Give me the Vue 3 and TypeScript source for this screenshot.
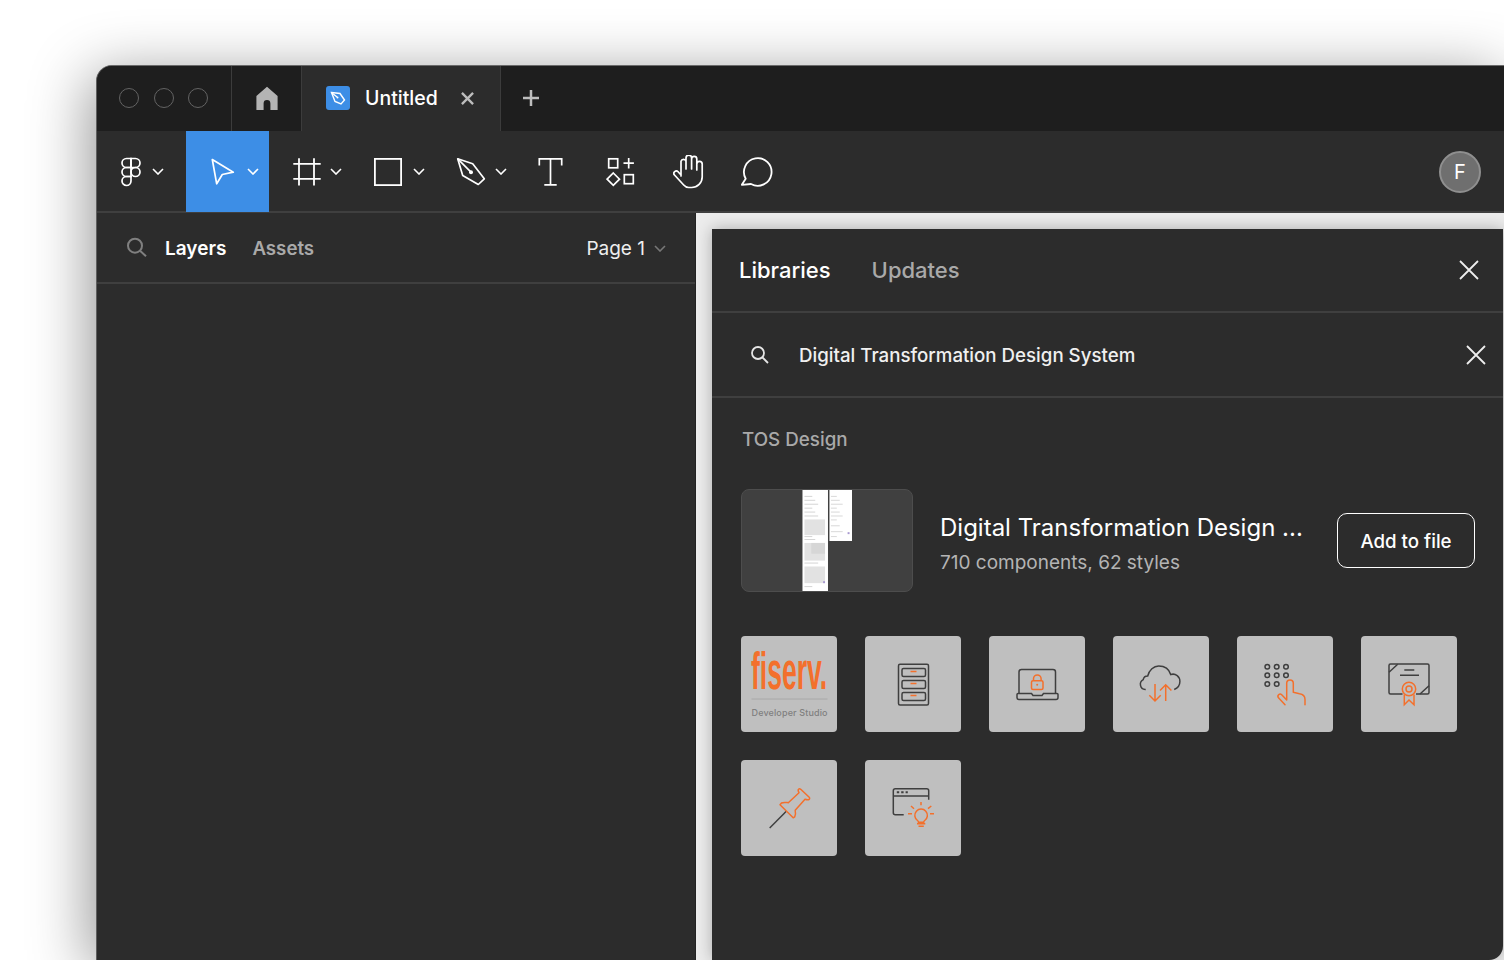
<script setup lang="ts">
// tiny text lines on the library thumbnail
const thumbLines = [6, 10, 14, 18, 22, 26, 47, 50, 74, 98].map((y, i) => ({ y, w: 8 + (i % 3) * 3 }));
const thumbLines2 = [6, 10, 14, 18, 22, 26, 30, 36, 42, 47].map((y, i) => ({ y, w: 6 + (i % 3) * 3 }));
</script>

<template>
  <div class="page">
    <div class="window">
      <header class="titlebar">
        <div class="lights">
          <span class="light"></span>
          <span class="light"></span>
          <span class="light"></span>
        </div>
        <div class="home-tab">
          <svg width="24" height="24" viewBox="0 0 24 24">
            <path fill="#b4b4b4" d="M12 .8 22.600 10v14h-7.200v-6.500a3.400 3.400 0 0 0-6.800 0V24H1.400V10z" />
          </svg>
        </div>
        <div class="file-tab">
          <span class="file-icon">
            <svg width="18" height="18" viewBox="0 0 18 18" fill="none" stroke="#fff" stroke-width="1.400">
              <path d="M2.500 3.500 11 4.500 15.500 11 12 15 6 12.500z" />
              <circle cx="8.500" cy="8.500" r="1" fill="#fff" stroke="none" />
              <path d="M3 4l5 4" />
            </svg>
          </span>
          <span class="file-name">Untitled</span>
          <svg class="file-close" width="13" height="13" viewBox="0 0 14 14" fill="none" stroke="#bdbdbd" stroke-width="2.500">
            <path d="M1 1l12 12M13 1 1 13" />
          </svg>
        </div>
        <svg class="new-tab" width="16" height="16" viewBox="0 0 16 16" fill="none" stroke="#bdbdbd" stroke-width="2.500">
          <path d="M8 0v16M0 8h16" />
        </svg>
      </header>

      <nav class="toolbar">
        <button class="tool tool-main">
          <svg width="30" height="30" viewBox="0 0 30 30" fill="none" stroke="#fff" stroke-width="1.700">
            <path d="M15 1.500h-4.500a4.500 4.500 0 0 0 0 9H15z" />
            <path d="M15 1.500h4.500a4.500 4.500 0 0 1 0 9H15z" />
            <path d="M15 10.500h-4.500a4.500 4.500 0 0 0 0 9H15z" />
            <circle cx="19.500" cy="15" r="4.500" />
            <path d="M10.500 19.500H15V24a4.500 4.500 0 1 1-4.500-4.500z" />
          </svg>
          <svg class="chev" width="12" height="7" viewBox="0 0 12 7"><path d="M1 1l5 5 5-5" /></svg>
        </button>
        <button class="tool tool-select">
          <svg width="30" height="30" viewBox="0 0 30 30" fill="none" stroke="#fff" stroke-width="1.700" stroke-linejoin="round">
            <path d="M4.300 2.500 25.300 15.200 14.300 17.500 8.700 26.800z" />
          </svg>
          <svg class="chev" width="12" height="7" viewBox="0 0 12 7"><path d="M1 1l5 5 5-5" /></svg>
        </button>
        <button class="tool tool-frame">
          <svg width="30" height="30" viewBox="0 0 30 30" fill="none" stroke="#fff" stroke-width="1.800">
            <path d="M2.300 6.800h27.400M2.300 21.800h27.400M8 1.200v27.300M23 1.200v27.300" />
          </svg>
          <svg class="chev" width="12" height="7" viewBox="0 0 12 7"><path d="M1 1l5 5 5-5" /></svg>
        </button>
        <button class="tool tool-rect">
          <svg width="30" height="30" viewBox="0 0 30 30" fill="none" stroke="#fff" stroke-width="1.800">
            <rect x="1.900" y="1.900" width="26.200" height="26.200" />
          </svg>
          <svg class="chev" width="12" height="7" viewBox="0 0 12 7"><path d="M1 1l5 5 5-5" /></svg>
        </button>
        <button class="tool tool-pen">
          <svg width="30" height="30" viewBox="0 0 30 30" fill="none" stroke="#fff" stroke-width="1.700" stroke-linejoin="round">
            <path d="M1.700 1.800 16.700 6.800 28.300 21.800 22.300 27.500 6.700 18.500z" />
            <path d="M1.700 1.800 15 15.200" />
            <circle cx="15" cy="15.200" r="2" fill="#fff" stroke="none" />
          </svg>
          <svg class="chev" width="12" height="7" viewBox="0 0 12 7"><path d="M1 1l5 5 5-5" /></svg>
        </button>
        <button class="tool tool-text">
          <svg width="30" height="30" viewBox="0 0 30 30" fill="none" stroke="#fff" stroke-width="1.700">
            <path d="M3.300 8.500V1.800h22.400v6.700M14.500 1.800v26M8.300 27.800h12.400" />
          </svg>
        </button>
        <button class="tool tool-comps">
          <svg width="30" height="30" viewBox="0 0 30 30" fill="none" stroke="#fff" stroke-width="1.700">
            <rect x="2.700" y="1.800" width="9" height="9" />
            <path d="M22.700 1v10.400M17.500 6.200h10.400" />
            <path d="M7.300 16 13.500 22.200 7.300 28.400 1.100 22.200z" />
            <rect x="18.300" y="17.700" width="9" height="9" />
          </svg>
        </button>
        <button class="tool tool-hand">
          <svg width="32" height="34" viewBox="0 0 32 34" fill="none" stroke="#fff" stroke-width="1.700" stroke-linecap="round" stroke-linejoin="round">
            <path d="M8 21V6.200a2.600 2.600 0 0 1 5 0V14M13 13V3a2.800 2.800 0 0 1 5.600 0v11M18.600 14V4a2.600 2.600 0 0 1 5.200 0v10M23.800 15V9a2.700 2.700 0 0 1 5.400 0v13a10.500 10.500 0 0 1-10.500 10.500h-3a7 7 0 0 1-5-2.500L1.500 20a2.400 2.400 0 0 1 3.600-3.200L8 20" />
          </svg>
        </button>
        <button class="tool tool-comment">
          <svg width="32" height="30" viewBox="0 0 32 30" fill="none" stroke="#fff" stroke-width="1.800" stroke-linejoin="round">
            <path d="M4.700 21.700A13.800 13.800 0 1 1 10 27L.8 27.800z" />
          </svg>
        </button>
        <div class="avatar">F</div>
      </nav>

      <div class="main">
        <aside class="sidebar">
          <div class="side-head">
            <svg class="side-search" width="22" height="22" viewBox="0 0 22 22" fill="none" stroke="#808080" stroke-width="2">
              <circle cx="9" cy="8.700" r="7" />
              <path d="M14 13.700l6 5.500" />
            </svg>
            <span class="side-tab active">Layers</span>
            <span class="side-tab">Assets</span>
            <span class="page-name">Page 1</span>
            <svg class="page-chev" width="12" height="7" viewBox="0 0 12 7"><path d="M1 1l5 5 5-5" /></svg>
          </div>
        </aside>

        <div class="canvas">
          <section class="panel">
            <div class="panel-tabs">
              <span class="panel-tab active">Libraries</span>
              <span class="panel-tab">Updates</span>
              <svg class="panel-x" width="22" height="22" viewBox="0 0 22 22" fill="none" stroke="#eee" stroke-width="1.800">
                <path d="M2 2l18 18M20 2 2 20" />
              </svg>
            </div>
            <div class="panel-search">
              <svg width="20" height="20" viewBox="0 0 20 20" fill="none" stroke="#e6e6e6" stroke-width="1.800">
                <circle cx="8" cy="8" r="6" />
                <path d="M12.500 12.500l5.500 5.500" />
              </svg>
              <span class="search-text">Digital Transformation Design System</span>
              <svg class="search-x" width="22" height="22" viewBox="0 0 22 22" fill="none" stroke="#eee" stroke-width="1.800">
                <path d="M2 2l18 18M20 2 2 20" />
              </svg>
            </div>
            <div class="panel-body">
              <div class="team">TOS Design</div>
              <div class="library">
                <svg class="thumb" width="172" height="103" viewBox="0 0 172 103">
                  <rect width="26" height="103" x="61" fill="#fff" />
                  <rect width="23" height="52" x="88.500" fill="#fff" />
                  <rect v-for="l in thumbLines" :key="l.y" x="63" :y="l.y" :width="l.w" height="1" fill="#d4d4d4" />
                  <rect v-for="l in thumbLines2" :key="l.y" x="90" :y="l.y" :width="l.w" height="1" fill="#d8d8d8" />
                  <rect x="63" y="30" width="21" height="16" fill="#e2e2e2" />
                  <rect x="63" y="54" width="21" height="18" fill="#e2e2e2" />
                  <rect x="63" y="78" width="21" height="17" fill="#e2e2e2" />
                  <rect x="70" y="54" width="14" height="11" fill="#d6d6d6" />
                  <rect x="82" y="93" width="2" height="2" fill="#a899d0" />
                  <rect x="107" y="43" width="2" height="2" fill="#a899d0" />
                </svg>
                <div class="lib-info">
                  <div class="lib-title">Digital Transformation Design ...</div>
                  <div class="lib-meta">710 components, 62 styles</div>
                </div>
                <button class="add-btn">Add to file</button>
              </div>
              <div class="tiles">
                <div class="tile">
                  <svg width="97" height="97" viewBox="0 0 97 97">
                    <text class="fiserv" transform="translate(10 53) scale(.51 1)">fiserv.</text>
                    <path d="M10.500 63h76" stroke="#a8a8a8" stroke-width="1" />
                    <text class="fiserv-sub" x="10.500" y="80" textLength="76" lengthAdjust="spacing">Developer Studio</text>
                  </svg>
                </div>
                <div class="tile">
                  <svg width="97" height="97" viewBox="0 0 97 97" fill="none">
                    <g class="dk">
                      <rect x="33.500" y="28.300" width="30" height="40.700" rx="1.500" />
                      <rect x="37" y="32.500" width="23.500" height="8" rx="1.500" />
                      <rect x="37" y="44.500" width="23.500" height="8" rx="1.500" />
                      <rect x="37" y="56.500" width="23.500" height="8" rx="1.500" />
                    </g>
                    <path class="or" d="M45.500 35.500h6M45.500 47.500h6M45.500 59.500h6" />
                  </svg>
                </div>
                <div class="tile">
                  <svg width="97" height="97" viewBox="0 0 97 97" fill="none">
                    <g class="dk">
                      <path d="M30 57.500V36a2.500 2.500 0 0 1 2.500-2.500h31.500a2.500 2.500 0 0 1 2.500 2.500v21.500" />
                      <path d="M29.500 57.500h13l1.500 2h9l1.500-2h13.500a1 1 0 0 1 1 1v3a2 2 0 0 1-2 2h-37a2 2 0 0 1-2-2v-3a1 1 0 0 1 1-1z" />
                    </g>
                    <g class="or">
                      <rect x="42.500" y="44.700" width="11.500" height="8.800" rx="1.500" />
                      <path d="M44.500 44.700v-2a3.800 3.800 0 0 1 7.600 0v2" />
                    </g>
                    <circle cx="48.200" cy="48.700" r="1" fill="#f3702c" />
                  </svg>
                </div>
                <div class="tile">
                  <svg width="97" height="97" viewBox="0 0 97 97" fill="none">
                    <path class="dk" d="M32.700 53.500h-.5a5.200 5.200 0 0 1-2-9.800 4.500 4.500 0 0 1 4.500-3.700c1.500-6 6-10 11-10 6 0 10.500 3.500 12 8.500 5-1.500 9.200 2 9.200 7 0 4-2 6.500-5.700 8" />
                    <path class="or" d="M42 48v17M36.300 59.300 42 65l5.700-5.700M52.700 65V48.500M47 54.500l5.700-5.700 5.700 5.700" />
                  </svg>
                </div>
                <div class="tile">
                  <svg width="97" height="97" viewBox="0 0 97 97" fill="none">
                    <g class="dk">
                      <circle cx="30.300" cy="30.700" r="2.300" />
                      <circle cx="39.700" cy="30.700" r="2.300" />
                      <circle cx="49" cy="30.700" r="2.300" />
                      <circle cx="30.300" cy="39.300" r="2.300" />
                      <circle cx="39.700" cy="39.300" r="2.300" />
                      <circle cx="49" cy="39.300" r="2.300" />
                      <circle cx="30.300" cy="48" r="2.300" />
                      <circle cx="39.700" cy="48" r="2.300" />
                    </g>
                    <path class="or" stroke-linecap="round" stroke-linejoin="round" d="M68 68.700V63.500c0-3-2.500-5.200-5.500-5.700l-6.200-1.500v-9a3.300 3.300 0 0 0-6.600 0V64l-5-5.300a2 2 0 0 0-3 3.200L48 68.700" />
                  </svg>
                </div>
                <div class="tile">
                  <svg width="97" height="97" viewBox="0 0 97 97" fill="none">
                    <g class="dk">
                      <path d="M41.500 58H29.500a1.500 1.500 0 0 1-1.500-1.500v-27a1.500 1.500 0 0 1 1.500-1.500h37a1.500 1.500 0 0 1 1.500 1.500v27a1.500 1.500 0 0 1-1.500 1.500H55" />
                      <path d="M28 36.300l8.700-8M59 58l9-8.300M43.300 34h10M39 39.300h19" />
                    </g>
                    <g class="or">
                      <circle cx="48" cy="53" r="6.700" />
                      <circle cx="48" cy="53" r="3" />
                      <path d="M43.300 58.500v10.200l4.700-4.700 5 4.700V58.500" />
                    </g>
                  </svg>
                </div>
                <div class="tile">
                  <svg width="97" height="97" viewBox="0 0 97 97" fill="none">
                    <path class="dk" d="M28.700 68 45.300 51.300" />
                    <path class="or" stroke-linejoin="round" d="M39 44.700l1.500-1.700c2-1 4.500-.5 6.800-.3L58 32.700c-.8-1.500-1.200-2.800-.5-3.500.7-.6 1.300-.6 2.200.1l8.500 8c.7.8.6 1.700-.3 2.200-1 .6-2.200.3-3.900-.2L54.200 50.300c.5 2.300.5 4.500-.5 6.500l-1.500 1z" />
                  </svg>
                </div>
                <div class="tile">
                  <svg width="97" height="97" viewBox="0 0 97 97" fill="none">
                    <g class="dk">
                      <path d="M38.700 54.700h-8.400a2 2 0 0 1-2-2V30.700a2 2 0 0 1 2-2h31.400a2 2 0 0 1 2 2v9M28.300 36h35.400" />
                      <path stroke-dasharray="2.400 2" stroke-width="2" d="M31.800 32.300h11" />
                    </g>
                    <g class="or">
                      <path d="M52.500 60.500a6.300 6.300 0 1 1 7.200 0c-.8.600-1 1.200-1 1.800h-5.200c0-.6-.2-1.200-1-1.800z" />
                      <path d="M52 63.800h8.300M53.500 66.300h5.300M56 42v3.300M46 46l3 2.700M66.300 46l-3.300 2.700M43 53.700h4M65 53.700h4" />
                    </g>
                  </svg>
                </div>
              </div>
            </div>
          </section>
        </div>
      </div>
    </div>
  </div>
</template>

<style>
html,
body {
  margin: 0;
  background: #fff;
}
</style>

<style scoped>
.page {
  width: 1504px;
  height: 960px;
  box-sizing: border-box;
  padding: 65px 0 0 96px;
  overflow: hidden;
  background: #fff;
  font-family: Inter, "Liberation Sans", sans-serif;
  color: #fff;
}

.window {
  height: 100%;
  display: flex;
  flex-direction: column;
  box-sizing: border-box;
  border-left: 1px solid #5f5f5f;
  border-top: 1px solid #6a6a6a;
  border-radius: 16px 0 0 0;
  background: #2c2c2c;
  box-shadow: -6px 10px 60px rgba(0, 0, 0, 0.42);
}

.titlebar {
  height: 65px;
  flex: none;
  box-sizing: border-box;
  display: flex;
  align-items: center;
  background: #1e1e1e;
  border-radius: 15px 0 0 0;
}

.lights {
  width: 134px;
  height: 100%;
  box-sizing: border-box;
  padding: 0 0 1px 22px;
  display: flex;
  align-items: center;
  gap: 14.500px;
}

.light {
  width: 20px;
  height: 20px;
  box-sizing: border-box;
  border: 1.500px solid #636363;
  border-radius: 50%;
}

.home-tab {
  width: 71px;
  height: 100%;
  padding-bottom: 1px;
  display: flex;
  align-items: center;
  justify-content: center;
  border-left: 1px solid #3c3c3c;
  border-right: 1px solid #3c3c3c;
  box-sizing: border-box;
}

.file-tab {
  width: 199px;
  height: 100%;
  box-sizing: border-box;
  padding: 0 0 1px 24px;
  display: flex;
  align-items: center;
  background: #2c2c2c;
  border-right: 1px solid #3c3c3c;
}

.file-icon {
  width: 24px;
  height: 24px;
  display: flex;
  align-items: center;
  justify-content: center;
  border-radius: 3px;
  background: #3d8ee6;
}

.file-name {
  margin-left: 15px;
  font-size: 19.500px;
  font-weight: 500;
}

.file-close {
  margin-left: 23px;
}

.new-tab {
  margin: 0 0 1px 22px;
}

.toolbar {
  height: 82px;
  flex: none;
  display: flex;
  box-sizing: border-box;
  border-bottom: 2px solid #3f3f3f;
}

.tool {
  height: 81px;
  padding: 0;
  border: none;
  background: none;
  display: flex;
  align-items: center;
  flex: none;
  gap: 9px;
  box-sizing: border-box;
}

.chev,
.page-chev {
  fill: none;
  stroke: #fff;
  stroke-width: 1.600;
}

.tool-main {
  width: 89px;
  padding-left: 19px;
  gap: 6px;
}

.tool-select {
  width: 83px;
  padding-left: 22px;
  background: #3d8ee6;
}

.tool-frame {
  width: 83px;
  padding-left: 22px;
}

.tool-rect {
  width: 82px;
  padding-left: 21px;
  gap: 10px;
}

.tool-pen {
  width: 83px;
  padding-left: 22px;
}

.tool-text {
  width: 68px;
  padding-left: 19px;
}

.tool-comps {
  width: 70px;
  padding-left: 21px;
}

.tool-hand {
  width: 67px;
  padding-left: 18px;
}

.tool-comment {
  width: 70px;
  padding-left: 19px;
}

.avatar {
  width: 42px;
  height: 42px;
  box-sizing: border-box;
  margin: 20px 23px 0 auto;
  display: flex;
  align-items: center;
  justify-content: center;
  border: 2px solid #8f8f8f;
  border-radius: 50%;
  background: #6f6f6f;
  font-size: 20px;
}

.main {
  flex: 1;
  min-height: 0;
  display: flex;
}

.sidebar {
  width: 599px;
  flex: none;
  box-sizing: border-box;
  border-right: 1px solid #222;
}

.side-head {
  height: 71px;
  box-sizing: border-box;
  padding: 2px 0 0 29px;
  display: flex;
  align-items: center;
  border-bottom: 2px solid #3f3f3f;
}

.side-search {
  margin: -2px 17px 0 0;
}

.side-tab {
  font-size: 19px;
  font-weight: 600;
  color: #a9a9a9;
  margin-right: 27px;
}

.side-tab.active {
  color: #fff;
}

.side-tab + .side-tab {
  font-size: 18.700px;
  margin-left: -1px;
}

.page-name {
  margin-left: auto;
  font-size: 19px;
  color: #eee;
}

.page-chev {
  margin: 0 29px 0 9px;
  stroke: #777;
}

.canvas {
  flex: 1;
  min-width: 0;
  box-sizing: border-box;
  padding: 16px 1px 0 16px;
  background: #ececec;
  overflow: hidden;
}

.panel {
  height: 100%;
  box-sizing: border-box;
  background: #2c2c2c;
  border-radius: 0 0 14px 0;
  box-shadow: 0 0 16px rgba(0, 0, 0, 0.28);
}

.panel-tabs {
  height: 84px;
  box-sizing: border-box;
  padding: 0 23px 0 27px;
  display: flex;
  align-items: center;
  gap: 41px;
  border-bottom: 2px solid #3f3f3f;
}

.panel-tab {
  font-size: 22px;
  font-weight: 500;
  color: #a9a9a9;
}

.panel-tab.active {
  color: #fff;
}

.panel-x {
  margin-left: auto;
}

.panel-search {
  height: 85px;
  box-sizing: border-box;
  padding: 0 16px 0 38px;
  display: flex;
  align-items: center;
  border-bottom: 2px solid #3f3f3f;
}

.search-text {
  margin: 2px 0 0 29px;
  font-size: 18.700px;
  font-weight: 500;
  color: #f0f0f0;
}

.search-x {
  margin-left: auto;
}

.panel-body {
  padding: 30px 0 0 29px;
}

.team {
  margin-left: 1px;
  font-size: 18.800px;
  font-weight: 500;
  line-height: 24px;
  color: #a9a9a9;
}

.library {
  margin-top: 37px;
  display: flex;
  align-items: center;
  padding-right: 28px;
}

.thumb {
  flex: none;
  background: #404040;
  border: 1px solid #4d4d4d;
  border-radius: 8px;
  box-sizing: border-box;
  overflow: hidden;
}

.lib-info {
  flex: 1;
  min-width: 0;
  margin-left: 27px;
  padding-top: 7px;
}

.lib-title {
  font-size: 24px;
  font-weight: 400;
  line-height: 30px;
  white-space: nowrap;
}

.lib-meta {
  margin-top: 8px;
  font-size: 19px;
  line-height: 24px;
  font-weight: 400;
  color: #b4b4b4;
}

.add-btn {
  width: 138px;
  height: 55px;
  flex: none;
  padding: 2px 0 0;
  background: none;
  color: #fff;
  border: 1.500px solid #fff;
  border-radius: 10px;
  font-family: inherit;
  font-size: 18.700px;
  font-weight: 500;
}

.tiles {
  margin-top: 44px;
  display: grid;
  grid-template-columns: repeat(6, 96px);
  grid-auto-rows: 96px;
  gap: 28px;
}

.tile {
  background: #bfbfbf;
  border-radius: 4px;
  overflow: hidden;
}

.tile svg {
  display: block;
  margin: -0.5px 0 0 -0.5px;
}

.dk {
  stroke: #3f3f3f;
  stroke-width: 1.500;
  fill: none;
}

.or {
  stroke: #f3702c;
  stroke-width: 1.500;
  fill: none;
}

.fiserv {
  font-family: "Liberation Sans", sans-serif;
  font-size: 52px;
  font-weight: 700;
  fill: #f3702c;
}

.fiserv-sub {
  font-family: Inter, sans-serif;
  font-size: 9px;
  font-weight: 500;
  fill: #808080;
}
</style>
